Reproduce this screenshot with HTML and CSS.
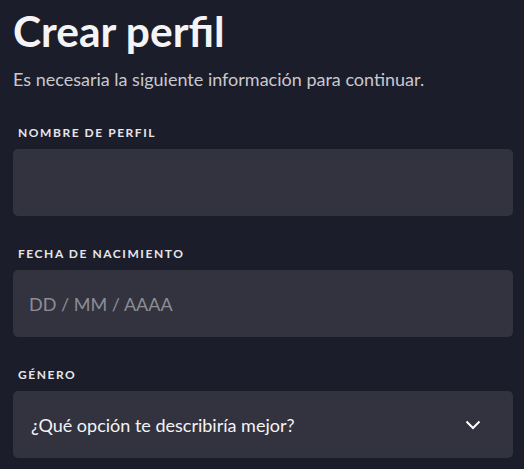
FILE: index.html
```html
<!DOCTYPE html>
<html lang="es">
<head>
<meta charset="utf-8">
<link rel="stylesheet" href="styles.css">
</head>
<body>
<main class="page">
  <h1 class="title">Crear perfil</h1>
  <p class="subtitle">Es necesaria la siguiente información para continuar.</p>
  <div class="field">
    <label class="label">NOMBRE DE PERFIL</label>
    <div class="input"></div>
  </div>
  <div class="field">
    <label class="label">FECHA DE NACIMIENTO</label>
    <div class="input"><span class="placeholder">DD / MM / AAAA</span></div>
  </div>
  <div class="field">
    <label class="label">GÉNERO</label>
    <div class="input select">
      <span class="value">¿Qué opción te describiría mejor?</span>
      <svg class="chevron" width="16" height="10" viewBox="0 0 16 10"><path d="M1.5 1.5 L8 8 L14.5 1.5" fill="none" stroke="#ffffff" stroke-width="2"/></svg>
    </div>
  </div>
</main>
</body>
</html>
```
FILE: styles.css
```css
html, body {
  margin: 0;
  padding: 0;
  background: #1c1d2a;
}
.page {
  padding: 0 11px 0 13px;
  font-family: Lato, "Liberation Sans", sans-serif;
  color: #ffffff;
}
.title {
  margin: 0;
  padding-top: 6px;
  font-size: 42.5px;
  font-weight: 700;
  line-height: 50px;
  color: #f4f4f6;
}
.subtitle {
  margin: 12px 0 0;
  font-size: 18px;
  line-height: 22px;
  color: #c9c9cf;
}
.field {
  margin-top: 35px;
}
.field + .field {
  margin-top: 30px;
}
.label {
  display: block;
  padding-left: 5px;
  font-size: 12px;
  font-weight: 700;
  letter-spacing: 1.55px;
  line-height: 16px;
  color: #e6e6ea;
  margin-bottom: 8px;
}
.input {
  height: 67px;
  border-radius: 5px;
  background: #32333f;
  display: flex;
  align-items: center;
  padding: 0 16px;
  box-sizing: border-box;
}
.placeholder {
  font-size: 18px;
  color: #8d8d95;
}
.select {
  justify-content: space-between;
  padding: 0 32px 0 18px;
}
.value {
  font-size: 18px;
  color: #f4f4f6;
}
.chevron {
  display: block;
}
```
